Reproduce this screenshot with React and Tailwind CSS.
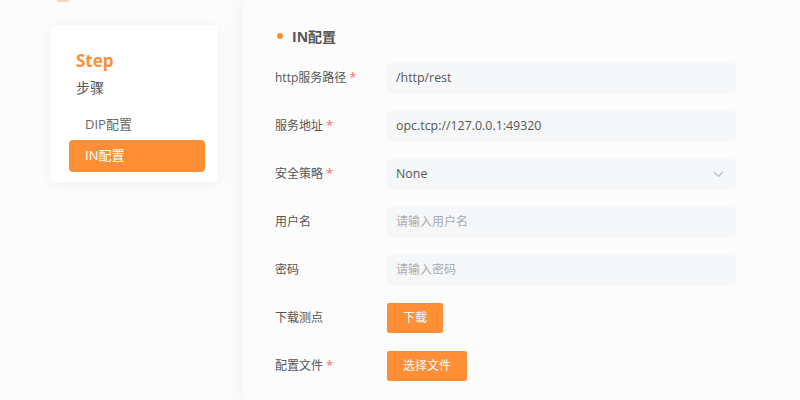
import React from "react";

const font = { fontFamily: '"Open Sans", "Noto Sans CJK SC", sans-serif' };

function Label({ text, req }) {
  return (
    <div className="w-[112px] text-[12px] text-[#555]">
      {text}
      {req && <span className="ml-[3px] text-[13px] text-[#f56c6c]">*</span>}
    </div>
  );
}

function Field({ label, req, children }) {
  return (
    <div className="flex items-center h-[30px]">
      <Label text={label} req={req} />
      {children}
    </div>
  );
}

function Input({ value, placeholder, select }) {
  return (
    <div className="w-[349px] h-[30px] bg-[#f6f7f9] rounded-[2px] flex items-center justify-between pl-[9px] pr-[12px]">
      {value ? (
        <span className="text-[12.4px] text-[#555]">{value}</span>
      ) : (
        <span className="text-[12px] text-[#aaa]">{placeholder}</span>
      )}
      {select && (
        <svg width="11" height="7" viewBox="0 0 11 7" fill="none">
          <path d="M1 1l4.5 4.5L10 1" stroke="#b8bcc4" strokeWidth="1.2" />
        </svg>
      )}
    </div>
  );
}

export default function App() {
  return (
    <div className="w-[800px] h-[400px] bg-[#fcfcfc] flex overflow-hidden" style={font}>
      <div className="w-[243px] shrink-0 relative">
        <div className="absolute left-[57px] top-0 w-[12px] h-[2px] bg-[#ffd3b0] rounded-b" />
        <div className="ml-[51px] mt-[25px] w-[167px] h-[157px] bg-white rounded-[5px] shadow-[0_2px_14px_rgba(0,0,0,0.05)] pt-[25px] pl-[18px] pr-[13px]">
          <div className="pl-[7px] text-[17px] font-bold text-[#ff8f36] leading-[22px]">Step</div>
          <div className="pl-[7px] mt-[6px] text-[14px] text-[#555] leading-[20px]">步骤</div>
          <div className="mt-[16px] pl-[16px] text-[13px] text-[#666] leading-[20px]">DIP配置</div>
          <div className="mt-[6px] h-[32px] rounded-[4px] bg-[#ff8f36] flex items-center pl-[16px] text-[13px] text-white">
            IN配置
          </div>
        </div>
      </div>
      <div className="flex-1 bg-[#fcfcfc] shadow-[-6px_0_18px_rgba(0,0,0,0.035)] pl-[32px] pt-[25px]">
        <div className="flex items-center h-[22px]">
          <div className="w-[6px] h-[6px] rounded-full bg-[#ff8f36] ml-[2px]" />
          <div className="ml-[9px] text-[14px] font-bold text-[#555]">IN配置</div>
        </div>
        <div className="mt-[16px] flex flex-col gap-[18px]">
          <Field label="http服务路径" req>
            <Input value="/http/rest" />
          </Field>
          <Field label="服务地址" req>
            <Input value="opc.tcp://127.0.0.1:49320" />
          </Field>
          <Field label="安全策略" req>
            <Input value="None" select />
          </Field>
          <Field label="用户名">
            <Input placeholder="请输入用户名" />
          </Field>
          <Field label="密码">
            <Input placeholder="请输入密码" />
          </Field>
          <Field label="下载测点">
            <button className="h-[30px] w-[56px] rounded-[2px] bg-[#ff8f36] text-white text-[12px]">下载</button>
          </Field>
          <Field label="配置文件" req>
            <button className="h-[30px] w-[80px] rounded-[2px] bg-[#ff8f36] text-white text-[12px]">选择文件</button>
          </Field>
        </div>
      </div>
    </div>
  );
}
